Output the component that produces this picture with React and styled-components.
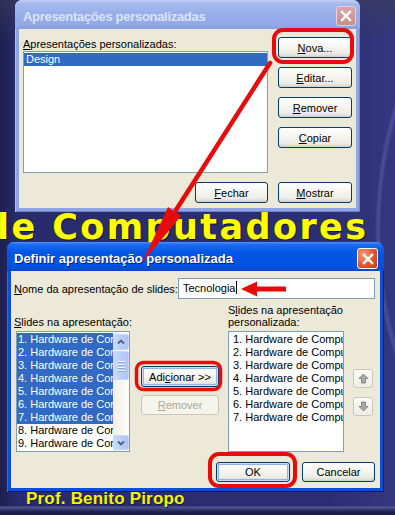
import React from "react";
import styled, { createGlobalStyle, css } from "styled-components";

const ui = `"Liberation Sans", Arial, sans-serif`;

const GlobalStyle = createGlobalStyle`
  html, body {
    margin: 0;
    padding: 0;
    background: #272a6b;
  }
  * {
    box-sizing: border-box;
  }
`;

const Page = styled.div`
  position: relative;
  width: 395px;
  height: 515px;
  overflow: hidden;
  display: flex;
  flex-direction: column;
  font-family: ${ui};
  font-size: 11px;
  color: #000;
  background:
    radial-gradient(ellipse 95px 210px at 470px 230px, transparent 93%, #4a4f98 97%, transparent 100%),
    linear-gradient(180deg, rgba(60, 60, 90, 0.6) 0, rgba(60, 60, 90, 0) 40px),
    linear-gradient(90deg, #1e2050 0, #282b6c 18px, #2b2e72 330px, #33377e 395px);
`;

const Window = styled.section`
  display: flex;
  flex-direction: column;
  margin-left: ${(p) => p.$left}px;
  width: ${(p) => p.$width}px;
  height: ${(p) => p.$height}px;
  padding: 0 4px 4px;
  border-radius: 7px 7px 0 0;
  background: ${(p) => (p.$active ? "#0b4fd6" : "#8fa4e2")};
  box-shadow: ${(p) =>
    p.$active
      ? "inset 1px 0 0 #2a6cf0, inset -1px 0 0 #00138c, inset 0 -1px 0 #00138c"
      : "inset 1px 0 0 #b2c2f0, inset -1px 0 0 #6f85c9, inset 0 -1px 0 #6f85c9"};
`;

const TitleBar = styled.div`
  display: flex;
  align-items: flex-start;
  height: 29px;
  margin: 0 -4px;
  padding: ${(p) => (p.$active ? "6px 6px 0 7px" : "6px 4px 0 8px")};
  border-radius: 7px 7px 0 0;
  background: ${(p) =>
    p.$active
      ? "linear-gradient(180deg, #4a95fb 0%, #1a6cf0 9%, #0457e4 35%, #0054e2 75%, #0048d2 100%)"
      : "linear-gradient(180deg, #c2d0f6 0%, #a6b9ee 12%, #98aeea 50%, #93a8e6 85%, #889ddd 100%)"};
`;

const TitleText = styled.div`
  flex: 1;
  font-family: ${ui};
  font-weight: bold;
  font-size: 13px;
  line-height: 21px;
  white-space: nowrap;
  letter-spacing: ${(p) => (p.$active ? "0" : "-0.3px")};
  color: ${(p) => (p.$active ? "#fff" : "#dbe3f8")};
  text-shadow: ${(p) => (p.$active ? "1px 1px 0 #0a1a8a" : "none")};
`;

const CloseBox = styled.div`
  width: ${(p) => (p.$active ? 21 : 20)}px;
  height: ${(p) => (p.$active ? 21 : 20)}px;
  display: flex;
  align-items: center;
  justify-content: center;
  border-radius: 3px;
  border: 1px solid ${(p) => (p.$active ? "#fff" : "#e3d3de")};
  background: ${(p) =>
    p.$active
      ? "radial-gradient(circle at 30% 30%, #f29b7c, #e2562f 55%, #c23a12)"
      : "linear-gradient(180deg, #d9a7a6, #c98c8d)"};
`;

const Body = styled.div`
  flex: 1;
  background: #ece9d8;
`;

const TopBody = styled(Body)`
  display: grid;
  grid-template-columns: 245px 74px;
  column-gap: 10px;
  padding: 8px 4px 5px;
`;

const BottomBody = styled(Body)`
  display: flex;
  flex-direction: column;
  padding: 7px 5px 6px 3px;
`;

const Label = styled.div`
  line-height: ${(p) => p.$lh || 14}px;
  white-space: nowrap;
  width: ${(p) => (p.$w ? `${p.$w}px` : "auto")};
`;

const Key = styled.span`
  text-decoration: underline;
  text-underline-offset: 1px;
`;

const ListBox = styled.div`
  display: flex;
  width: ${(p) => p.$w}px;
  height: ${(p) => p.$h}px;
  margin-left: ${(p) => p.$ml || 0}px;
  border: 1px solid #7f9db9;
  background: #fff;
  overflow: hidden;
`;

const Items = styled.div`
  flex: 1;
  min-width: 0;
  padding-top: 1px;
`;

const Item = styled.div`
  height: 13px;
  line-height: 13px;
  padding-left: ${(p) => p.$pad || 1}px;
  white-space: nowrap;
  overflow: hidden;
  background: ${(p) => (p.$selected ? "#316ac5" : "transparent")};
  color: ${(p) => (p.$selected ? "#fff" : "#000")};
`;

const ScrollBar = styled.div`
  display: flex;
  flex-direction: column;
  width: 16px;
  background: linear-gradient(90deg, #f1efe6, #fdfdfb);
`;

const ScrollPart = styled.div`
  display: flex;
  flex-direction: column;
  align-items: center;
  justify-content: center;
  gap: 2px;
  height: ${(p) => p.$h}px;
  margin: ${(p) => p.$m || "1px 0 0"};
  border: 1px solid #c8d6fb;
  border-radius: 2px;
  background: linear-gradient(90deg, #cbdafd, #b8ccf9 60%, #aec4f5);
`;

const Grip = styled.span`
  width: 7px;
  height: 1px;
  background: #eef3fe;
  box-shadow: 0 1px 0 #8fa9e0;
`;

const ButtonColumn = styled.div`
  display: flex;
  flex-direction: column;
  gap: ${(p) => p.$gap}px;
  width: ${(p) => p.$w}px;
  margin-left: ${(p) => p.$ml || 0}px;
  padding-top: ${(p) => p.$pt || 0}px;
`;

const Button = styled.div`
  display: flex;
  align-items: center;
  justify-content: center;
  width: ${(p) => (p.$w ? `${p.$w}px` : "100%")};
  height: ${(p) => p.$h || 21}px;
  border: 1px solid #003c74;
  border-radius: 3px;
  font-family: ${ui};
  font-size: 11px;
  color: #000;
  white-space: nowrap;
  background: linear-gradient(180deg, #ffffff 0%, #f6f5f0 45%, #ecebe4 80%, #d8d3c8 100%);
  box-shadow: inset 0 -1px 0 #d6d0c5;
  ${(p) =>
    p.$default &&
    css`
      box-shadow: inset 0 0 0 1px #cee0fb, inset 0 0 0 2px #8db2ec;
    `}
  ${(p) =>
    p.$disabled &&
    css`
      border-color: #c9c7ba;
      color: #aca899;
      background: #f5f4ea;
      box-shadow: none;
    `}
`;

const ArrowBtn = styled(Button)`
  width: 20px;
  height: 19px;
  border-color: #c9c7ba;
  background: linear-gradient(180deg, #fbfbf8, #efede4);
  box-shadow: none;
`;

const BottomRow = styled.div`
  display: flex;
  justify-content: flex-end;
  gap: ${(p) => p.$gap}px;
  margin-top: ${(p) => p.$mt}px;
  grid-column: 1 / -1;
`;

const Row = styled.div`
  display: flex;
  align-items: ${(p) => p.$align || "flex-start"};
  height: ${(p) => (p.$h ? `${p.$h}px` : "auto")};
  margin-top: ${(p) => p.$mt || 0}px;
`;

const TextBox = styled.div`
  margin-left: auto;
  width: 199px;
  height: 21px;
  padding: 0 4px;
  border: 1px solid #7f9db9;
  background: #fff;
  line-height: 19px;
  white-space: nowrap;
`;

const Caret = styled.span`
  display: inline-block;
  width: 1px;
  height: 13px;
  margin-left: 1px;
  vertical-align: -2px;
  background: #000;
`;

const Banner = styled.div`
  height: 30px;
  margin-left: -16px;
  font-family: "DejaVu Sans", ${ui};
  font-weight: bold;
  font-size: 35px;
  line-height: 30px;
  letter-spacing: 2.4px;
  white-space: nowrap;
  color: #ffff00;
  text-shadow: 1px 1px 0 #12123a, -1px 0 0 #3a3a20;
`;

const Footer = styled.div`
  flex: 1;
  padding-left: 26px;
  font-family: ${ui};
  font-weight: bold;
  font-size: 17px;
  line-height: 14px;
  letter-spacing: 0.2px;
  color: #f4f400;
  text-shadow: 1px 1px 0 #1a1a40;
  background: linear-gradient(180deg, transparent 0 14px, #55598f 15px, #3c3f7a 17px, #1c1e48 20px);
`;

const Overlay = styled.svg`
  position: absolute;
  left: 0;
  top: 0;
  pointer-events: none;
`;

const CloseX = () => (
  <svg width="12" height="12" viewBox="0 0 12 12">
    <path d="M2 2 L10 10 M10 2 L2 10" stroke="#fff" strokeWidth="2.4" strokeLinecap="square" />
  </svg>
);

const Chevron = ({ down }) => (
  <svg width="8" height="6" viewBox="0 0 8 6">
    <path
      d={down ? "M1 1.5 L4 4.5 L7 1.5" : "M1 4.5 L4 1.5 L7 4.5"}
      fill="none"
      stroke="#4d6185"
      strokeWidth="1.8"
    />
  </svg>
);

const MoveArrow = ({ down }) => (
  <svg width="11" height="11" viewBox="0 0 11 11">
    <path
      d={down ? "M5.5 10 L1 5.5 H3.5 V1 H7.5 V5.5 H10 Z" : "M5.5 1 L1 5.5 H3.5 V10 H7.5 V5.5 H10 Z"}
      fill="#a9a9a9"
      stroke="#7a7a7a"
      strokeWidth="0.8"
    />
  </svg>
);

const slides = Array.from({ length: 9 }, (_, i) => `${i + 1}. Hardware de Computadores`);
const picked = slides.slice(0, 7);

export default function App() {
  return (
    <>
      <GlobalStyle />
      <Page>
        <Window $left={15} $width={345} $height={212}>
          <TitleBar>
            <TitleText>Apresentações personalizadas</TitleText>
            <CloseBox>
              <CloseX />
            </CloseBox>
          </TitleBar>
          <TopBody>
            <div>
              <Label>
                <Key>A</Key>presentações personalizadas:
              </Label>
              <ListBox $w={245} $h={122}>
                <Items>
                  <Item $selected $pad={2}>Design</Item>
                </Items>
              </ListBox>
            </div>
            <ButtonColumn $gap={9}>
              <Button>
                <Key>N</Key>ova...
              </Button>
              <Button>
                <Key>E</Key>ditar...
              </Button>
              <Button>
                <Key>R</Key>emover
              </Button>
              <Button>
                <Key>C</Key>opiar
              </Button>
            </ButtonColumn>
            <BottomRow $gap={10} $mt={9}>
              <Button $w={73}>
                <Key>F</Key>echar
              </Button>
              <Button $w={74}>
                <Key>M</Key>ostrar
              </Button>
            </BottomRow>
          </TopBody>
        </Window>

        <Banner>de Computadores</Banner>

        <Window $active $left={7} $width={377} $height={250}>
          <TitleBar $active>
            <TitleText $active>Definir apresentação personalizada</TitleText>
            <CloseBox $active>
              <CloseX />
            </CloseBox>
          </TitleBar>
          <BottomBody>
            <Row $align="center" $h={21}>
              <Label>
                <Key>N</Key>ome da apresentação de slides:
              </Label>
              <TextBox>
                Tecnologia
                <Caret />
              </TextBox>
            </Row>
            <Row $align="flex-end" $h={24} $mt={5}>
              <Label $w={214} $lh={12}>
                <Key>S</Key>lides na apresentação:
              </Label>
              <Label $lh={12}>
                S<Key>l</Key>ides na apresentação
                <br />
                personalizada:
              </Label>
            </Row>
            <Row $mt={3}>
              <ListBox $w={114} $h={121} $ml={2}>
                <Items>
                  {slides.map((s, i) => (
                    <Item key={s + i} $selected={i < 7}>
                      {s}
                    </Item>
                  ))}
                </Items>
                <ScrollBar>
                  <ScrollPart $h={16} $m="2px 0 0">
                    <Chevron />
                  </ScrollPart>
                  <ScrollPart $h={29} $m="1px 0 0">
                    <Grip />
                    <Grip />
                    <Grip />
                    <Grip />
                  </ScrollPart>
                  <div style={{ flex: 1 }} />
                  <ScrollPart $h={15} $m="0 0 1px">
                    <Chevron down />
                  </ScrollPart>
                </ScrollBar>
              </ListBox>
              <ButtonColumn $w={78} $ml={11} $pt={35} $gap={8}>
                <Button $default>
                  Adi<Key>c</Key>ionar &gt;&gt;
                </Button>
                <Button $disabled $h={20}>
                  <Key>R</Key>emover
                </Button>
              </ButtonColumn>
              <ListBox $w={116} $h={121} $ml={9}>
                <Items>
                  {picked.map((s, i) => (
                    <Item key={s + i} $pad={4}>
                      {s}
                    </Item>
                  ))}
                </Items>
              </ListBox>
              <ButtonColumn $w={20} $ml={9} $pt={38} $gap={9}>
                <ArrowBtn>
                  <MoveArrow />
                </ArrowBtn>
                <ArrowBtn>
                  <MoveArrow down />
                </ArrowBtn>
              </ButtonColumn>
            </Row>
            <BottomRow $gap={12} $mt={10}>
              <Button $w={74} $h={20} $default>
                OK
              </Button>
              <Button $w={73} $h={20}>
                Cancelar
              </Button>
            </BottomRow>
          </BottomBody>
        </Window>

        <Footer>Prof. Benito Piropo</Footer>

        <Overlay width="395" height="515" viewBox="0 0 395 515">
          <g fill="none" stroke="#e80b0b" strokeLinejoin="round">
            <rect x="274" y="30" width="78" height="32" rx="9" strokeWidth="4" />
            <rect x="136.5" y="362.5" width="84" height="27" rx="7" strokeWidth="3.5" />
            <rect x="210" y="454" width="85" height="32" rx="9" strokeWidth="4" />
            <line x1="270" y1="63" x2="176" y2="210" strokeWidth="4.5" strokeLinecap="round" />
          </g>
          <g fill="#e80b0b">
            <polygon points="142,263 181,216 168,207" />
            <polygon points="241,289 257,281.5 257,296.5" />
            <rect x="255" y="286.5" width="31" height="5" />
          </g>
        </Overlay>
      </Page>
    </>
  );
}
